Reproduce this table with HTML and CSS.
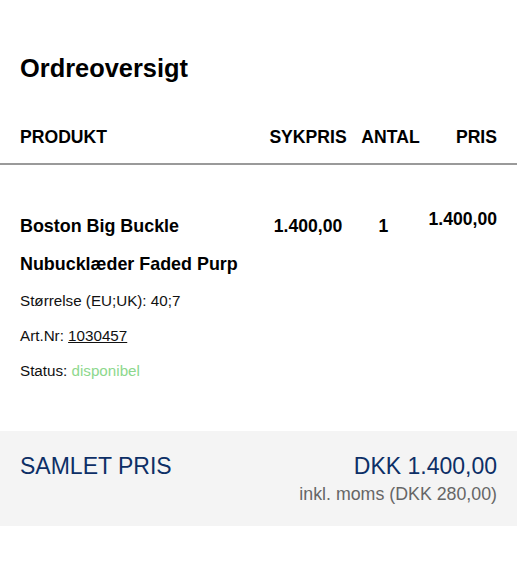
FILE: index.html
```html
<!DOCTYPE html>
<html lang="da">
<head>
<meta charset="utf-8">
<title>Ordreoversigt</title>
<link rel="stylesheet" href="styles.css">
</head>
<body>
<main class="overview">
  <h1 class="title">Ordreoversigt</h1>
  <div class="grid head">
    <div class="c-prod">PRODUKT</div>
    <div class="c-syk">SYKPRIS</div>
    <div class="c-antal">ANTAL</div>
    <div class="c-pris">PRIS</div>
  </div>
  <div class="grid item">
    <div class="c-prod">
      <div class="name">Boston Big Buckle Nubucklæder Faded Purp</div>
      <p class="meta">Størrelse (EU;UK): 40;7</p>
      <p class="meta">Art.Nr: <span class="art">1030457</span></p>
      <p class="meta">Status: <span class="ok">disponibel</span></p>
    </div>
    <div class="c-syk val">1.400,00</div>
    <div class="c-antal val qty">1</div>
    <div class="c-pris val price">1.400,00</div>
  </div>
  <section class="total">
    <div class="total-label">SAMLET PRIS</div>
    <div class="total-right">
      <div class="total-sum">DKK 1.400,00</div>
      <div class="total-vat">inkl. moms (DKK 280,00)</div>
    </div>
  </section>
</main>
</body>
</html>
```
FILE: styles.css
```css
html, body {
  margin: 0;
  padding: 0;
  background: #fff;
}
body {
  font-family: "Liberation Sans", Arial, sans-serif;
  color: #000;
}
.overview {
  padding-top: 54px;
}
.title {
  margin: 0 20px;
  font-size: 25.4px;
  line-height: 29px;
  font-weight: bold;
}
.grid {
  display: grid;
  grid-template-columns: 1fr 90px 75px 69px;
  padding: 0 20px;
}
.head {
  margin-top: 44px;
  font-size: 17.6px;
  line-height: 20px;
  font-weight: bold;
  padding-bottom: 16px;
  border-bottom: 2px solid #9a9a9a;
}
.c-syk, .c-antal { text-align: center; }
.c-pris { text-align: right; }
.item {
  padding-top: 42px;
}
.name {
  font-size: 17.9px;
  line-height: 38px;
  font-weight: bold;
}
.meta {
  margin: 0;
  font-size: 15.2px;
  line-height: 35px;
  color: #111;
}
.art { text-decoration: underline; }
.ok { color: #8dd88d; }
.val {
  font-size: 17.6px;
  line-height: 38px;
  font-weight: bold;
}
.qty { padding-right: 14px; }
.price { line-height: 25px; }
.total {
  margin-top: 43px;
  background: #f4f4f4;
  display: flex;
  justify-content: space-between;
  align-items: flex-start;
  padding: 22px 20px 18px;
}
.total-label, .total-sum {
  font-size: 23px;
  line-height: 27px;
  color: #0d2f66;
}
.total-right { text-align: right; }
.total-vat {
  font-size: 17.8px;
  line-height: 28px;
  color: #666;
}
```
